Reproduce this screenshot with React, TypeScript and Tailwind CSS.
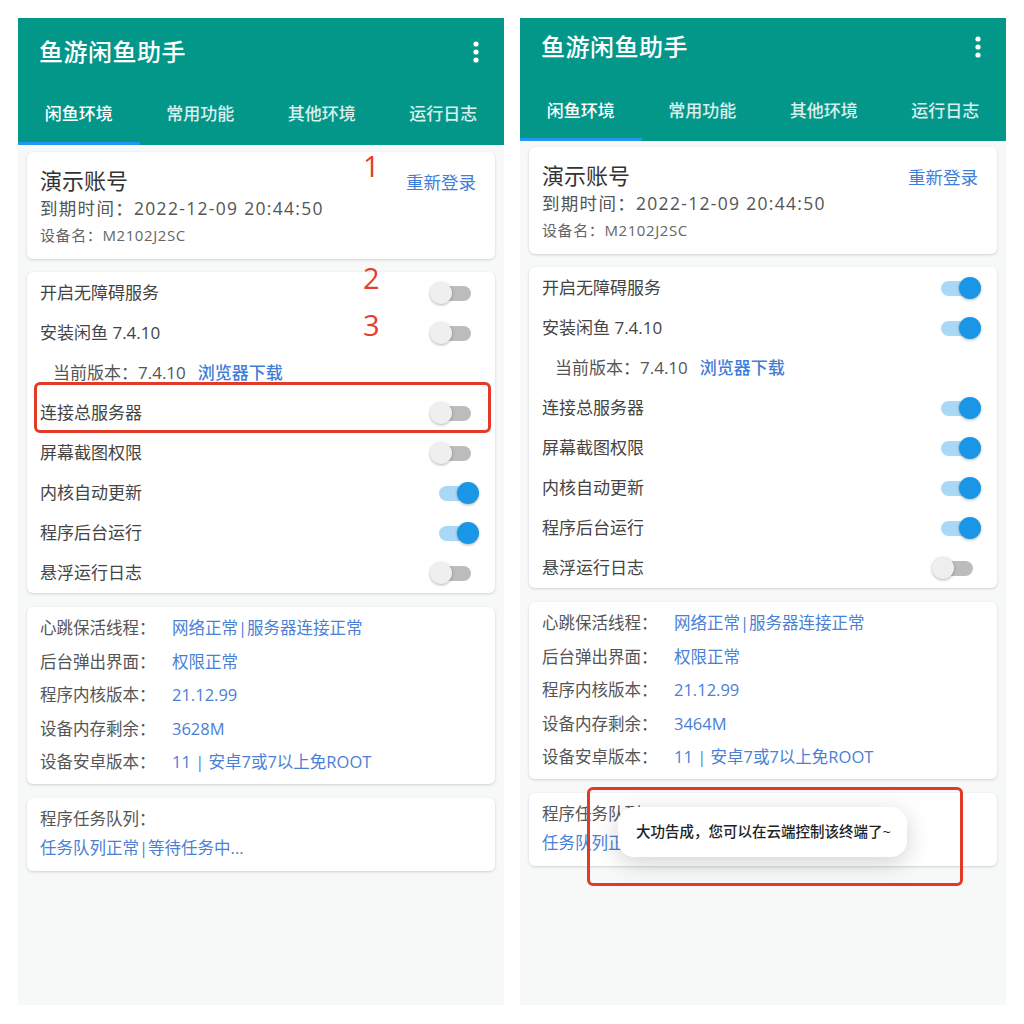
import React from "react";

type Phone = {
  barH: string;
  tabH: string;
  cardTop: string;
  data: { toggles: boolean[]; mem: string };
  overlay?: React.ReactNode;
};

const Switch = ({ on }: { on: boolean }) => (
  <div className="relative w-[49px] h-[24px]">
    <div
      className={`absolute left-[9px] right-[8px] top-[5px] h-[15px] rounded-full ${
        on ? "bg-[#a9d9f7]" : "bg-[#bcbcbc]"
      }`}
    />
    <div
      className={`absolute top-[1px] w-[22px] h-[22px] rounded-full shadow-[0_1px_3px_rgba(0,0,0,0.3)] ${
        on ? "left-[27px] bg-[#1996e6]" : "left-0 bg-[#efefef]"
      }`}
    />
  </div>
);

const tabs = ["闲鱼环境", "常用功能", "其他环境", "运行日志"];

const rows = [
  "开启无障碍服务",
  "安装闲鱼 7.4.10",
  null,
  "连接总服务器",
  "屏幕截图权限",
  "内核自动更新",
  "程序后台运行",
  "悬浮运行日志",
];

const card = "mx-[9px] bg-white rounded-[6px] shadow-[0_1px_3px_rgba(0,0,0,0.16)]";

const PhoneScreen = ({ barH, tabH, cardTop, data, overlay }: Phone) => {
  let t = 0;
  const info = [
    ["心跳保活线程：", "网络正常|服务器连接正常"],
    ["后台弹出界面：", "权限正常"],
    ["程序内核版本：", "21.12.99"],
    ["设备内存剩余：", data.mem],
    ["设备安卓版本：", "11 | 安卓7或7以上免ROOT"],
  ];

  return (
    <div className="relative w-[486px] h-[987px] bg-[#f7f8f8] flex flex-col">
      <div className="bg-[#03978a] text-white">
        <div className={`${barH} flex items-center justify-between pl-[21px] pr-[25px]`}>
          <span className="text-[24px] font-medium tracking-[0.5px]">鱼游闲鱼助手</span>
          <svg width="6" height="22" viewBox="0 0 6 22">
            <circle cx="3" cy="3" r="2.6" fill="white" />
            <circle cx="3" cy="11" r="2.6" fill="white" />
            <circle cx="3" cy="19" r="2.6" fill="white" />
          </svg>
        </div>
        <div className={`${tabH} grid grid-cols-4`}>
          {tabs.map((tab, i) => (
            <div
              key={tab}
              className={`flex items-center justify-center border-b-[3px] text-[17px] font-medium ${
                i === 0 ? "border-[#2196f3] text-white" : "border-transparent text-white/85"
              }`}
            >
              {tab}
            </div>
          ))}
        </div>
      </div>

      <div className={`${cardTop} flex flex-col gap-[13px]`}>
        <div className={`${card} h-[107px] pt-[15px] px-[13px] flex justify-between`}>
          <div className="flex flex-col">
            <span className="h-[26px] leading-[26px] text-[22px] text-[#333]">演示账号</span>
            <span className="h-[30px] leading-[30px] text-[17.5px] tracking-[1.3px] text-[#555]">
              到期时间：2022-12-09 20:44:50
            </span>
            <span className="h-[24px] leading-[24px] text-[15px] tracking-[0.6px] text-[#666]">设备名：M2102J2SC</span>
          </div>
          <span className="mt-[4px] mr-[6px] h-[22px] leading-[22px] text-[17.5px] text-[#3f7ed8]">重新登录</span>
        </div>

        <div className={`${card} pt-[1px] pl-[13px] pr-[16px]`}>
          {rows.map((label, i) =>
            label === null ? (
              <div key={i} className="h-[40px] flex items-center pl-[13px] text-[17px] text-[#555]">
                当前版本：7.4.10
                <span className="ml-[12px] text-[#3f7ed8] font-medium">浏览器下载</span>
              </div>
            ) : (
              <div key={i} className="h-[40px] flex items-center justify-between">
                <span className="text-[17px] text-[#444]">{label}</span>
                <Switch on={data.toggles[t++]} />
              </div>
            )
          )}
        </div>

        <div className={`${card} h-[177px] pt-[5px] px-[13px] mt-[1px]`}>
          {info.map(([k, v]) => (
            <div key={k} className="h-[33.5px] flex items-center text-[16.5px]">
              <span className="w-[132px] text-[#555]">{k}</span>
              <span className="text-[#4a7fd6]">{v}</span>
            </div>
          ))}
        </div>

        <div className={`${card} h-[73px] pt-[7px] px-[13px] mt-[1px] text-[16.5px]`}>
          <div className="h-[28px] leading-[28px] text-[#555]">程序任务队列：</div>
          <div className="h-[30px] leading-[30px] text-[#4a7fd6]">任务队列正常|等待任务中...</div>
        </div>
      </div>
      {overlay}
    </div>
  );
};

export default function App() {
  return (
    <div className="w-[1024px] h-[1024px] bg-white pt-[18px] pl-[18px] flex gap-[16px] font-['Open_Sans','Noto_Sans_CJK_SC',sans-serif]">
      <PhoneScreen
        barH="h-[68px]"
        tabH="h-[59px]"
        cardTop="mt-[7px]"
        data={{ toggles: [false, false, false, false, true, true, false], mem: "3628M" }}
        overlay={
          <>
            <span className="absolute left-[345px] top-[133px] text-[29px] leading-none text-[#e63d2e]">1</span>
            <span className="absolute left-[345px] top-[245px] text-[29px] leading-none text-[#e63d2e]">2</span>
            <span className="absolute left-[345px] top-[292px] text-[29px] leading-none text-[#e63d2e]">3</span>
            <div className="absolute left-[16px] top-[364px] w-[457px] h-[51px] border-[3px] border-[#e23a26] rounded-[6px]" />
          </>
        }
      />
      <PhoneScreen
        barH="h-[58px]"
        tabH="h-[65px] pt-[8px]"
        cardTop="mt-[6px]"
        data={{ toggles: [true, true, true, true, true, true, false], mem: "3464M" }}
        overlay={
          <>
            <div className="absolute left-[98px] top-[789px] w-[289px] h-[50px] bg-white rounded-[16px] shadow-[0_6px_24px_rgba(0,0,0,0.18)] flex items-center pl-[18px] text-[14.5px] font-medium text-[#222]">
              大功告成，您可以在云端控制该终端了~
            </div>
            <div className="absolute left-[67px] top-[769px] w-[376px] h-[99px] border-[3px] border-[#e23a26] rounded-[6px]" />
          </>
        }
      />
    </div>
  );
}
